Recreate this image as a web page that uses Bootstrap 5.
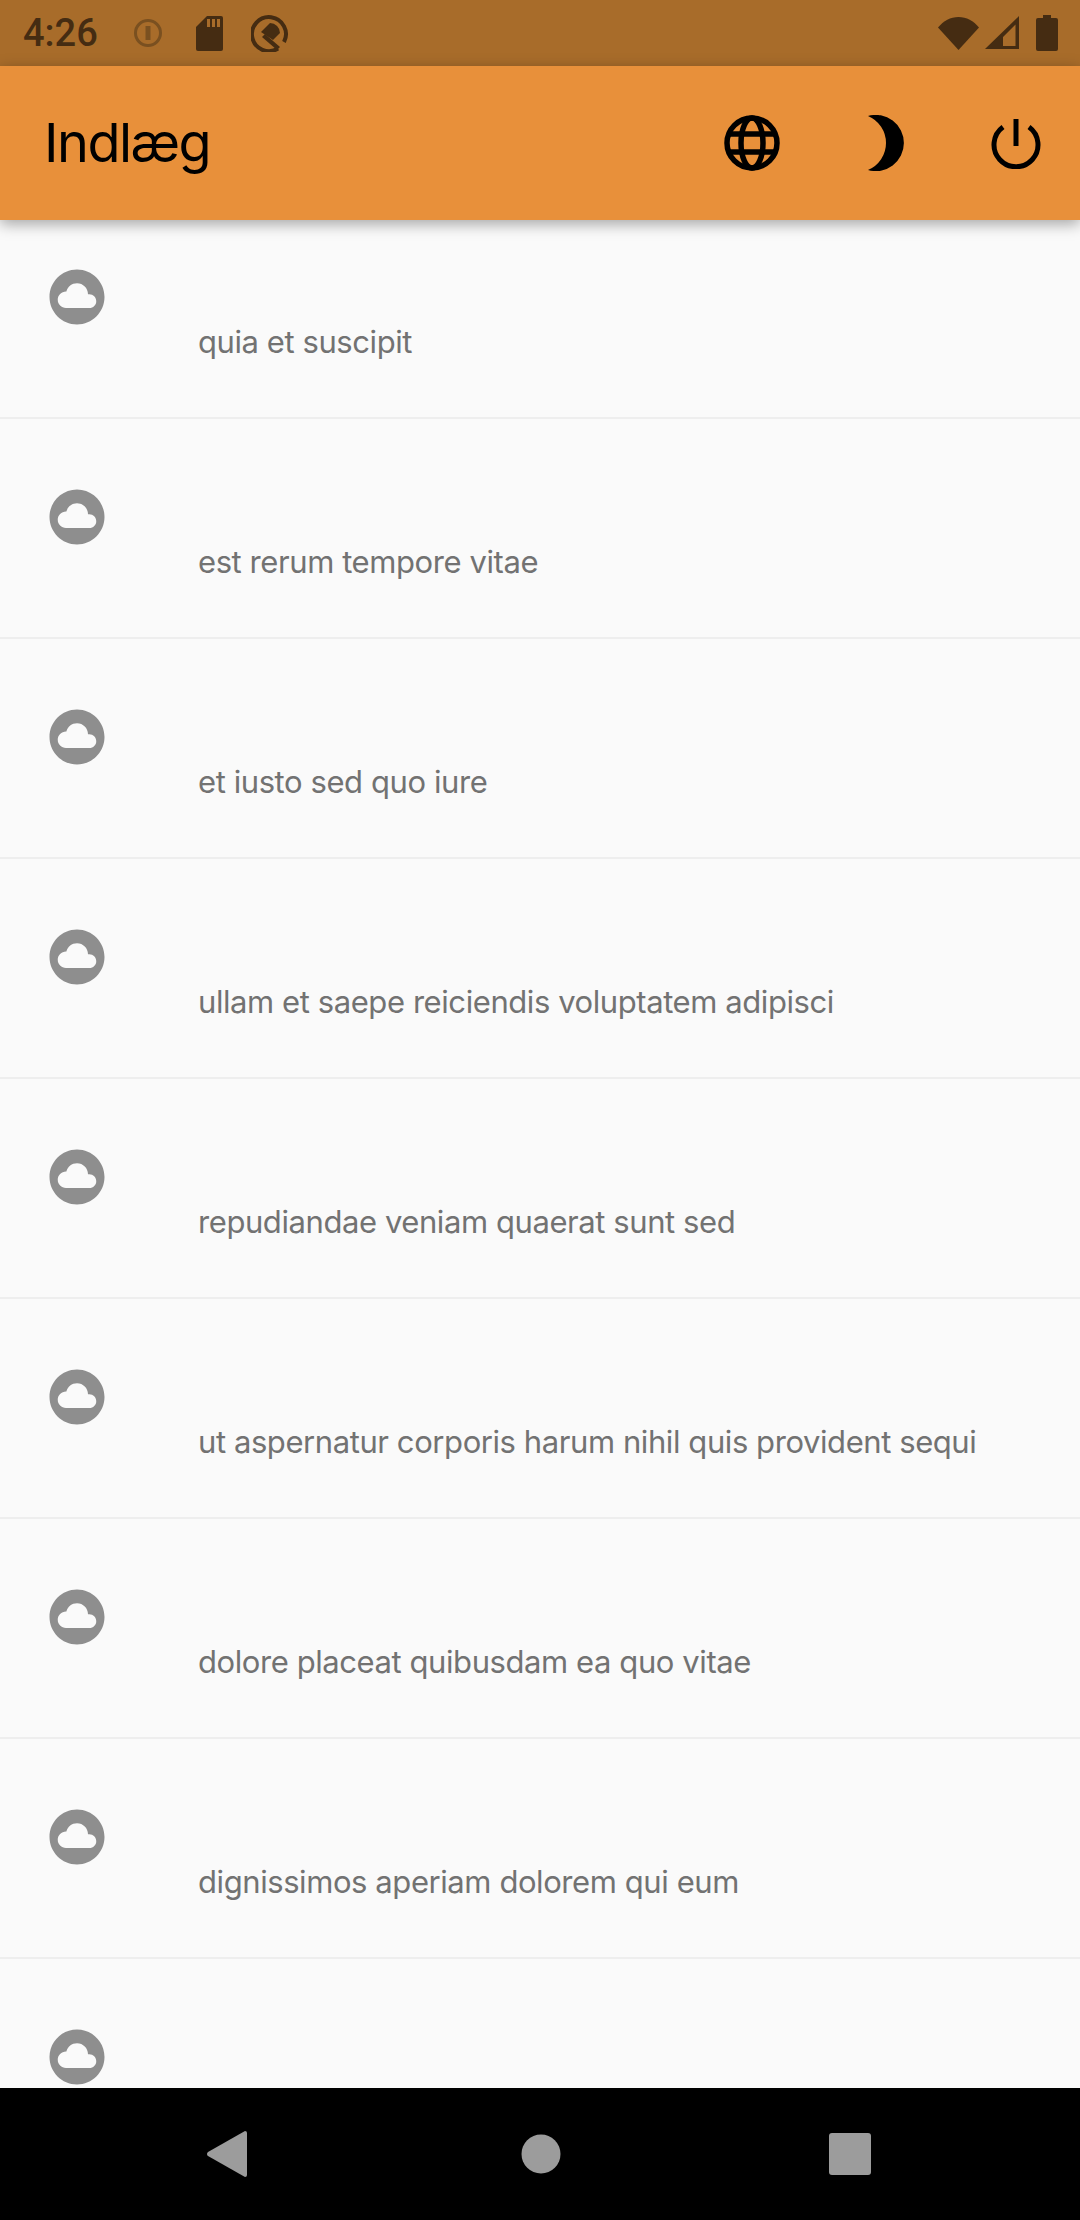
<!DOCTYPE html>
<html lang="da">
<head>
<meta charset="UTF-8">
<meta name="viewport" content="width=device-width, initial-scale=1.0">
<title>Indlæg</title>
<link href="https://cdn.jsdelivr.net/npm/bootstrap@5.3.3/dist/css/bootstrap.min.css" rel="stylesheet">
<style>
html, body { height: 100%; overflow: hidden; }
body { background: #fafafa; font-family: "Roboto", "Liberation Sans", sans-serif; }
.phone-screen { height: 2220px; }
.status-strip { height: 66px; background: #a86c2a; color: #452c12; padding: 0 22px 0 23px; }
.status-time { font-size: 38px; font-weight: 500; line-height: 1; width: 110px; }
.status-sd { margin-left: 32px; }
.status-saver { margin-left: 28px; }
.app-strip { height: 154px; background: #e8903a; padding: 0 39px 0 44px; box-shadow: 0 4px 14px rgba(0,0,0,.35); z-index: 2; }
.app-title { font-family: "Inter", sans-serif; font-size: 54px; font-weight: 400; letter-spacing: -1.5px; color: #000; margin: 0; }
.app-moon { margin-left: 87px; }
.app-power { margin-left: 86px; }
.post-list { flex: 1 1 0; min-height: 0; overflow: hidden; }
.post-scroll { margin-top: -21px; }
.post-row { height: 220px; border-bottom: 2px solid #eeeeee; padding: 65px 0 0 44px; }
.post-icon { width: 66px; height: 66px; flex: none; color: #8e8e8e; }
.post-text { font-family: "Inter", sans-serif; font-size: 31px; color: #727272; margin: 56px 0 0 88px; letter-spacing: -.42px; line-height: 44px; }
.nav-strip { height: 132px; background: #000; padding: 0 209px 0 207px; }
.nav-home { margin-left: 6px; }
</style>
</head>
<body>

<svg width="0" height="0" class="position-absolute">
  <symbol id="cloudCircle" viewBox="0 0 24 24">
    <path fill="currentColor" d="M12 2C6.48 2 2 6.48 2 12s4.48 10 10 10 10-4.48 10-10S17.52 2 12 2zm4.5 14H8c-1.66 0-3-1.34-3-3s1.34-3 3-3l.14.01C8.58 8.28 10.13 7 12 7c2.21 0 4 1.79 4 4h.5c1.38 0 2.5 1.12 2.5 2.5S17.88 16 16.5 16z"/>
  </symbol>
</svg>

<div class="phone-screen d-flex flex-column">

  <!-- Status bar -->
  <div class="status-strip d-flex align-items-center justify-content-between flex-shrink-0">
    <div class="d-flex align-items-center">
      <span class="status-time">4:26</span>
      <svg width="30" height="30" viewBox="0 0 30 30"><circle cx="15" cy="15" r="12.500" fill="none" stroke="#7a5020" stroke-width="3"/><rect x="12.500" y="8" width="5" height="14" fill="#7a5020"/></svg>
      <svg class="status-sd" width="28" height="36" viewBox="0 0 28 36"><path fill="currentColor" d="M12 1h14a2 2 0 0 1 2 2v31a2 2 0 0 1-2 2H3a2 2 0 0 1-2-2V12z"/><path fill="#a86c2a" d="M12 4h3v8h-3zM17 4h3v8h-3zM22 4h3v8h-3z"/></svg>
      <svg class="status-saver" width="38" height="38" viewBox="0 0 38 38">
        <path fill="none" stroke="currentColor" stroke-width="4" d="M27 34.500A17 17 0 1 1 33 28"/>
        <path fill="currentColor" d="M10 18l9-9a10 10 0 0 1 10 10l-7 7z"/>
        <path fill="currentColor" d="M11 23l3-3 15 13-3 3z"/>
      </svg>
    </div>
    <div class="d-flex align-items-center">
      <svg width="42" height="33" viewBox="0 0 42 33"><path fill="currentColor" d="M0 10.500C5.500 4 12.500 0 20.500 0S35.500 4 41 10.500L20.500 33z"/></svg>
      <svg class="ms-1" width="36" height="36" viewBox="0 0 36 36"><path fill="currentColor" fill-rule="evenodd" d="M35 1v33H1zM31.500 9.500L19 22v9h12.500z"/></svg>
      <svg class="ms-3" width="22" height="36" viewBox="0 0 22 36"><path fill="currentColor" d="M7 0h8v3h5a2 2 0 0 1 2 2v29a2 2 0 0 1-2 2H2a2 2 0 0 1-2-2V5a2 2 0 0 1 2-2h5z"/></svg>
    </div>
  </div>

  <!-- App bar -->
  <div class="app-strip d-flex align-items-center justify-content-between position-relative flex-shrink-0">
    <h1 class="app-title">Indlæg</h1>
    <div class="d-flex align-items-center">
      <svg width="56" height="56" viewBox="0 0 56 56" fill="none" stroke="#000" stroke-width="5.500">
        <circle cx="28" cy="28" r="25"/>
        <ellipse cx="28" cy="28" rx="11" ry="25"/>
        <path d="M5 19h46M5 37h46"/>
      </svg>
      <svg class="app-moon" width="38" height="56" viewBox="0 0 38 56"><path d="M1 1A28.100 28.100 0 1 1 1 55A29.250 29.250 0 0 0 1 1z" fill="#000"/></svg>
      <svg class="app-power" width="50" height="52" viewBox="0 0 50 52" fill="none" stroke="#000" stroke-width="5">
        <path d="M25 2v27"/>
        <path d="M12 10a22 22 0 1 0 26 0"/>
      </svg>
    </div>
  </div>

  <!-- Post list -->
  <div class="post-list">
    <div class="post-scroll" id="postList"></div>
  </div>

  <!-- Android navigation -->
  <div class="nav-strip d-flex align-items-center justify-content-between flex-shrink-0">
    <svg width="40" height="46" viewBox="0 0 40 46"><path fill="#9c9c9c" d="M38 0a2 2 0 0 1 2 2v42a2 2 0 0 1-2 2L1 25a2.500 2.500 0 0 1 0-4z"/></svg>
    <svg class="nav-home" width="40" height="40" viewBox="0 0 40 40"><circle cx="20" cy="20" r="19.500" fill="#9c9c9c"/></svg>
    <svg width="42" height="42" viewBox="0 0 42 42"><rect width="42" height="42" rx="3" fill="#9c9c9c"/></svg>
  </div>
</div>

<script src="https://cdn.jsdelivr.net/npm/bootstrap@5.3.3/dist/js/bootstrap.bundle.min.js"></script>
<script>
const posts = [
  "quia et suscipit",
  "est rerum tempore vitae",
  "et iusto sed quo iure",
  "ullam et saepe reiciendis voluptatem adipisci",
  "repudiandae veniam quaerat sunt sed",
  "ut aspernatur corporis harum nihil quis provident sequi",
  "dolore placeat quibusdam ea quo vitae",
  "dignissimos aperiam dolorem qui eum",
  ""
];

document.getElementById("postList").innerHTML = posts.map(title => `
  <div class="post-row d-flex align-items-start">
    <svg class="post-icon"><use href="#cloudCircle"/></svg>
    <div class="post-text">${title}</div>
  </div>`).join("");
</script>

</body>
</html>
